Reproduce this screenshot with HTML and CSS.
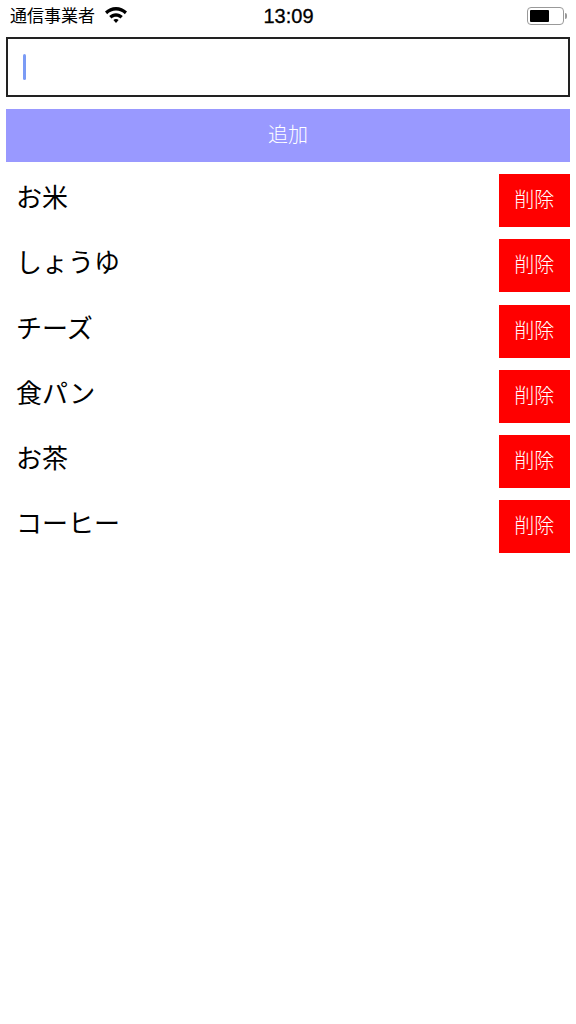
FILE: index.html
```html
<!DOCTYPE html>
<html lang="ja">
<head>
    <meta charset="UTF-8">
    <meta name="viewport" content="width=device-width, initial-scale=1.0">
    <title>買い物リスト</title>
    <link rel="stylesheet" href="styles.css">
</head>
<body>
    <div class="status-bar">
        <div class="status-left">
            <span class="carrier">通信事業者</span>
            <svg class="wifi" width="22" height="16" viewBox="1.300 2.200 19.400 13.200" preserveAspectRatio="none">
                <path d="M11 2.200c3.700 0 7.100 1.400 9.700 3.800l-1.900 2.100C16.700 6.200 14 5.100 11 5.100S5.300 6.200 3.200 8.100L1.300 6C3.900 3.600 7.300 2.200 11 2.200z" fill="#000"/>
                <path d="M11 7.300c2.300 0 4.400.9 6 2.300l-2 2.100c-1.100-1-2.500-1.500-4-1.500s-2.900.5-4 1.500l-2-2.100c1.600-1.400 3.700-2.300 6-2.300z" fill="#000"/>
                <path d="M11 12c.9 0 1.700.3 2.300.9L11 15.400l-2.300-2.500c.6-.6 1.400-.9 2.300-.9z" fill="#000"/>
            </svg>
        </div>
        <span class="time">13:09</span>
        <div class="battery">
            <div class="battery-body"><div class="battery-level"></div></div>
            <div class="battery-tip"></div>
        </div>
    </div>

    <div class="container">
        <div class="text-input"><span class="caret"></span></div>
        <button class="add-button">追加</button>

        <ul class="item-list">
            <li class="item"><span class="item-name">お米</span><button class="delete-button">削除</button></li>
            <li class="item"><span class="item-name">しょうゆ</span><button class="delete-button">削除</button></li>
            <li class="item"><span class="item-name">チーズ</span><button class="delete-button">削除</button></li>
            <li class="item"><span class="item-name">食パン</span><button class="delete-button">削除</button></li>
            <li class="item"><span class="item-name">お茶</span><button class="delete-button">削除</button></li>
            <li class="item"><span class="item-name">コーヒー</span><button class="delete-button">削除</button></li>
        </ul>
    </div>
</body>
</html>
```

FILE: styles.css
```css
* {
    margin: 0;
    padding: 0;
    box-sizing: border-box;
    font-family: "Noto Sans CJK JP", "Noto Sans", sans-serif;
}

body {
    background-color: #fff;
    color: #000;
}

.status-bar {
    height: 32px;
    padding: 0 9px 0 10px;
    display: grid;
    grid-template-columns: 1fr auto 1fr;
    align-items: center;
}

.status-left {
    display: flex;
    align-items: center;
    gap: 10px;
}

.carrier {
    font-size: 17px;
    font-weight: 400;
    line-height: 30px;
    margin-bottom: 2px;
}

.wifi {
    margin-bottom: 2px;
}

.time {
    font-family: "Liberation Sans", sans-serif;
    font-size: 20px;
    font-weight: 400;
    -webkit-text-stroke: 0.3px #000;
}

.battery {
    justify-self: end;
    display: flex;
    align-items: center;
}

.battery-body {
    width: 37px;
    height: 18px;
    padding: 2px;
    border: 1px solid #999;
    border-radius: 4px;
}

.battery-level {
    width: 19px;
    height: 100%;
    background-color: #000;
    border-radius: 1px;
}

.battery-tip {
    width: 2px;
    height: 6px;
    margin-left: 1px;
    background-color: #999;
    border-radius: 0 2px 2px 0;
}

.container {
    padding: 5px 6px 0;
}

.text-input {
    height: 60px;
    padding-left: 15px;
    border: 2px solid #222;
    display: flex;
    align-items: center;
}

.caret {
    width: 3px;
    height: 26px;
    background-color: #7b9bf5;
    border-radius: 2px;
}

.add-button {
    display: block;
    width: 100%;
    height: 53px;
    margin-top: 12px;
    padding-bottom: 4px;
    border: none;
    background-color: #9999ff;
    color: #fff;
    font-size: 20px;
    font-weight: 300;
}

.item-list {
    list-style: none;
    margin-top: 12.300px;
    display: flex;
    flex-direction: column;
    gap: 12.200px;
}

.item {
    display: flex;
    justify-content: space-between;
    align-items: flex-start;
}

.item-name {
    padding-left: 10px;
    font-size: 26px;
    font-weight: 400;
    line-height: 45px;
    margin-top: -1px;
}

.delete-button {
    width: 71.500px;
    height: 53px;
    padding-bottom: 4px;
    border: none;
    background-color: #ff0000;
    color: #fff;
    font-size: 20px;
    font-weight: 300;
}
```
